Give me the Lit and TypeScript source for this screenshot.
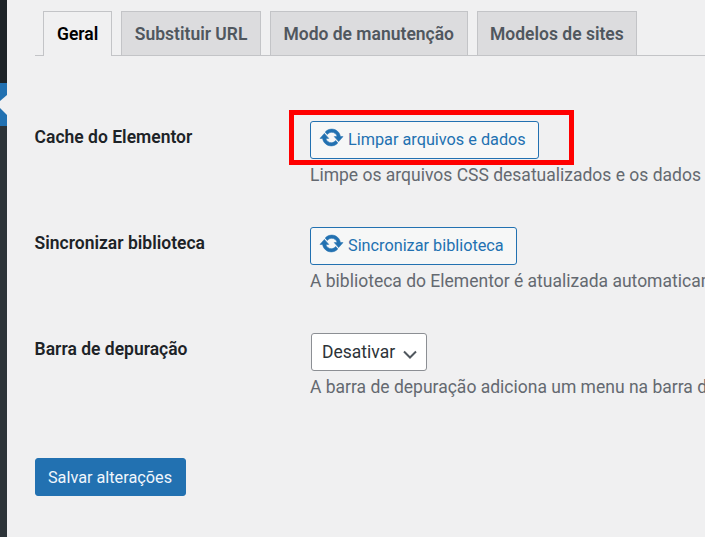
import { LitElement, html, css } from "lit";
import { customElement } from "lit/decorators.js";

const updateIcon = html`<svg class="ico" viewBox="0 0 20 20" aria-hidden="true"><path fill="currentColor" stroke="currentColor" stroke-width=".45" d="M10.2 3.28c3.53 0 6.43 2.61 6.92 6h2.08l-3.5 4-3.5-4h2.32c-.45-1.97-2.21-3.45-4.32-3.45-1.45 0-2.73.71-3.54 1.78L4.95 5.66C6.23 4.2 8.11 3.28 10.2 3.28zm-.4 13.44c-3.52 0-6.43-2.61-6.92-6H.8l3.5-4c1.17 1.33 2.33 2.67 3.5 4H5.48c.45 1.97 2.21 3.45 4.32 3.45 1.45 0 2.73-.71 3.54-1.78l1.71 1.95c-1.28 1.46-3.15 2.38-5.25 2.38z"/></svg>`;

@customElement("app-root")
export class AppRoot extends LitElement {
  static styles = css`
    :host {
      display: block;
      position: relative;
      width: 705px;
      height: 537px;
      overflow: hidden;
      background: #f0f0f1;
      font-family: Roboto, "Liberation Sans", sans-serif;
      font-size: 17.5px;
      color: #1d2327;
    }
    .page { display: flex; height: 537px; }
    .side { width: 7px; flex: none; display: flex; flex-direction: column; background: #2c3338; }
    .side-top { height: 83px; background: #1d2327; }
    .side-active { height: 43px; background: #2271b1; }
    .notch {
      position: absolute; left: 0; top: 95px; width: 7px; height: 20px;
      background: #f0f0f1;
      clip-path: polygon(0 6px, 100% 0, 100% 100%, 0 13px);
    }
    .main { flex: 1; min-width: 0; padding: 11px 0 0 28px; white-space: nowrap; overflow: hidden; }
    .tabs { display: flex; height: 44px; border-bottom: 1px solid #c3c4c7; padding-left: 8px; gap: 9px; }
    .tab {
      box-sizing: border-box; height: 44px; padding: 0 12.5px; display: flex; align-items: center;
      border: 1px solid #c3c4c7; border-bottom: 0; background: #dcdcde; color: #50575e;
      font-weight: 600; font-size: 17.5px; line-height: 24px;
    }
    .tab.on { background: #f0f0f1; color: #000; height: 45px; padding: 0 13px; }
    .rows { display: flex; flex-direction: column; margin-top: 65px; }
    .row { display: flex; height: 106px; }
    .label { width: 275px; flex: none; font-weight: 600; line-height: 24px; padding-top: 4px; color: #1d2327; margin-left: -0.4px; margin-right: 0.4px; }
    .field { display: flex; flex-direction: column; align-items: flex-start; }
    .btn {
      box-sizing: border-box; height: 38px; display: flex; align-items: center; gap: 4px;
      padding: 0 12.5px 0 8px; border: 1px solid #2271b1; border-radius: 3px;
      background: #f6f7f7; color: #2271b1; font-size: 16.25px; line-height: 24px;
    }
    .ico { width: 25px; height: 25px; display: block; flex: none; margin-bottom: 5px; }
    .desc { color: #646970; line-height: 24px; margin-top: 4px; }
    .select {
      box-sizing: border-box; height: 38px; margin: 0 0 0 1px; display: flex; align-items: center; gap: 7px;
      padding: 0 8px 0 10px; border: 1px solid #8c8f94; border-radius: 3px; background: #fff; color: #2c3338;
    }
    .select svg { width: 16px; height: 16px; display: block; margin-top: 3px; }
    .save {
      box-sizing: border-box; width: 151px; height: 38px; display: flex; align-items: center; justify-content: center;
      margin-top: 19px; border: 1px solid #2271b1; border-radius: 3px; background: #2271b1; color: #f0f6fc;
      font-size: 16.25px; padding-right: 1px;
    }
    .mark { position: absolute; left: 289px; top: 110px; width: 285px; height: 55px; box-sizing: border-box; border: 5px solid #f00; }
  `;

  render() {
    return html`
      <div class="page">
        <div class="side"><div class="side-top"></div><div class="side-active"></div></div>
        <div class="main">
          <div class="tabs">
            <div class="tab on">Geral</div>
            <div class="tab">Substituir URL</div>
            <div class="tab">Modo de manutenção</div>
            <div class="tab">Modelos de sites</div>
          </div>
          <div class="rows">
            <div class="row">
              <div class="label">Cache do Elementor</div>
              <div class="field">
                <div class="btn">${updateIcon}<span>Limpar arquivos e dados</span></div>
                <div class="desc">Limpe os arquivos CSS desatualizados e os dados</div>
              </div>
            </div>
            <div class="row">
              <div class="label">Sincronizar biblioteca</div>
              <div class="field">
                <div class="btn">${updateIcon}<span>Sincronizar biblioteca</span></div>
                <div class="desc">A biblioteca do Elementor é atualizada automaticamente</div>
              </div>
            </div>
            <div class="row">
              <div class="label">Barra de depuração</div>
              <div class="field">
                <div class="select"><span>Desativar</span>
                  <svg viewBox="0 0 16 16"><path d="M2 5.5 8 11.5l6-6" fill="none" stroke="#50575e" stroke-width="2"/></svg>
                </div>
                <div class="desc">A barra de depuração adiciona um menu na barra de</div>
              </div>
            </div>
          </div>
          <div class="save">Salvar alterações</div>
        </div>
      </div>
      <div class="notch"></div>
      <div class="mark"></div>
    `;
  }
}
